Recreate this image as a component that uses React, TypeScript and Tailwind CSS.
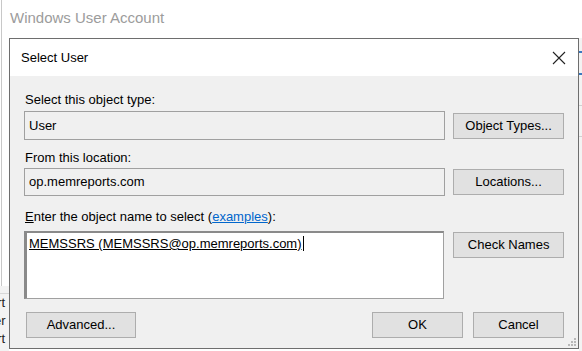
import React from "react";

const font = { fontFamily: '"Liberation Sans", Arial, sans-serif' };

function Btn({ children, className = "" }: { children: React.ReactNode; className?: string }) {
  return (
    <div
      className={`h-[26px] flex items-center justify-center bg-[#e1e1e1] border border-[#adadad] text-[13px] text-black ${className}`}
    >
      {children}
    </div>
  );
}

export default function App() {
  return (
    <div className="relative w-[582px] h-[351px] bg-white overflow-hidden" style={font}>
      {/* background window */}
      <div className="absolute left-[1px] top-0 w-px h-[300px] bg-[#c8c8c8]" />
      <div className="absolute left-[10px] top-[8px] text-[15px] text-[#9c9c9c] leading-[20px]">
        Windows User Account
      </div>
      {/* left fragments */}
      <div className="absolute left-0 top-[286px] w-[9px] h-[65px] bg-[#f3f3f3] flex flex-col text-[13px] text-[#222] leading-[18px] overflow-hidden">
        <div className="h-[8px] border-b border-[#d8d8d8]" />
        <div className="-ml-[10px] whitespace-nowrap">ort</div>
        <div className="-ml-[6px] whitespace-nowrap">er</div>
        <div className="-ml-[10px] whitespace-nowrap">ort</div>
      </div>
      {/* right fragments */}
      <div className="absolute left-[579px] top-[38px] w-[3px] h-[313px] bg-[#f3f3f3]">
        <div className="mt-[13px] h-[2px] bg-[#3a78c0]" />
        <div className="mt-[20px] h-[2px] bg-[#3a78c0]" />
        <div className="mt-[30px] h-px bg-[#d0d0d0]" />
        <div className="mt-[30px] h-px bg-[#d0d0d0]" />
      </div>

      {/* dialog */}
      <div className="absolute left-[9px] top-[38px] w-[570px] h-[311px] border border-[#6e6e6e] bg-[#f0f0f0] flex flex-col">
        <div className="h-[37px] bg-white flex items-center justify-between pl-[11px] pr-[9px]">
          <span className="text-[13px] text-black">Select User</span>
          <svg width="14" height="14" viewBox="0 0 14 14" className="mr-[3px]">
            <path d="M1 1 L13 13 M13 1 L1 13" stroke="#222" strokeWidth="1.1" fill="none" />
          </svg>
        </div>
        <div className="flex-1 flex flex-col px-[14px] pt-[16px] text-[13px] text-black relative">
          <div className="leading-[16px] pl-[1px]">Select this object type:</div>
          <div className="mt-[3px] flex items-center gap-[8px]">
            <div className="w-[422px] h-[29px] border border-[#a0a0a0] bg-[#f0f0f0] flex items-center pl-[4px]">User</div>
            <Btn className="w-[111px]">Object Types...</Btn>
          </div>
          <div className="mt-[10px] leading-[16px] pl-[1px]">From this location:</div>
          <div className="mt-[2px] flex items-center gap-[8px]">
            <div className="w-[422px] h-[28px] border border-[#a0a0a0] bg-[#f0f0f0] flex items-center pl-[4px]">op.memreports.com</div>
            <Btn className="w-[111px]">Locations...</Btn>
          </div>
          <div className="mt-[13px] leading-[16px] pl-[1px]">
            <span className="underline">E</span>nter the object name to select (
            <span className="text-[#0066cc] underline">examples</span>):
          </div>
          <div className="mt-[6px] flex items-start gap-[9px]">
            <div className="w-[421px] h-[68px] bg-white border border-[#a0a0a0] border-l-[3px] border-l-[#8a8a8a] border-t-[2px] border-t-[#8a8a8a] pl-[2px] pt-[1px]">
              <span className="underline leading-[16px] border-r border-black pr-[1px]">
                MEMSSRS (MEMSSRS@op.memreports.com)
              </span>
            </div>
            <Btn className="w-[111px] mt-[1px]">Check Names</Btn>
          </div>
          <div className="mt-[13px] flex items-center">
            <Btn className="w-[110px] ml-[2px]">Advanced...</Btn>
            <div className="flex-1" />
            <Btn className="w-[91px]">OK</Btn>
            <Btn className="w-[91px] ml-[10px]">Cancel</Btn>
          </div>
          <svg width="8" height="8" viewBox="0 0 8 8" className="absolute right-[2px] bottom-[2px]">
            <rect x="6" y="0" width="2" height="2" fill="#b8b8b8" />
            <rect x="3" y="3" width="2" height="2" fill="#b8b8b8" />
            <rect x="6" y="3" width="2" height="2" fill="#b8b8b8" />
            <rect x="0" y="6" width="2" height="2" fill="#b8b8b8" />
            <rect x="3" y="6" width="2" height="2" fill="#b8b8b8" />
            <rect x="6" y="6" width="2" height="2" fill="#b8b8b8" />
          </svg>
        </div>
      </div>
    </div>
  );
}
